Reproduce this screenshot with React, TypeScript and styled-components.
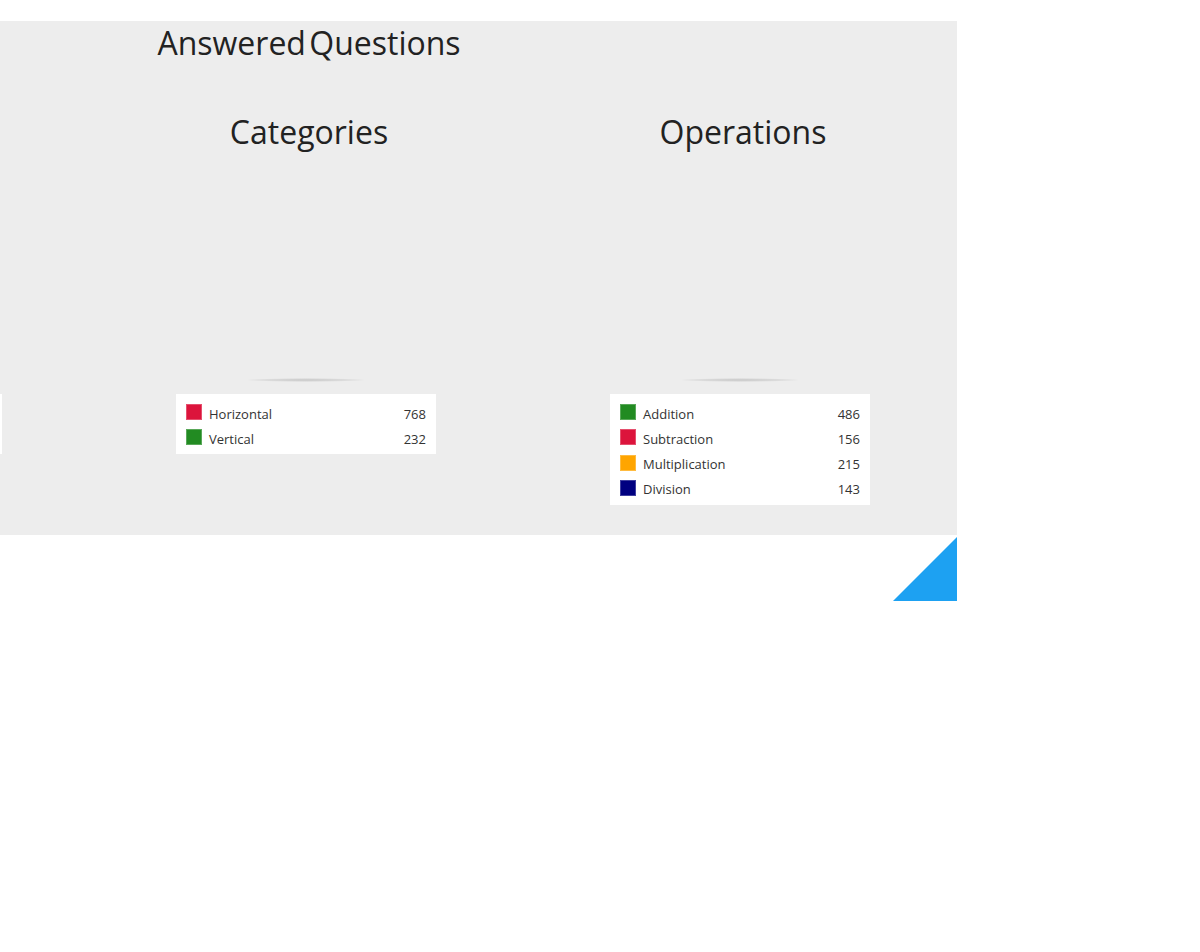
import React from "react";
import styled, { createGlobalStyle } from "styled-components";

const Global = createGlobalStyle`
  html, body { margin: 0; padding: 0; background: #ffffff; }
  body { font-family: "Open Sans", "Liberation Sans", sans-serif; color: #222; }
`;

const Page = styled.div`
  width: 957px;
  padding-top: 21px;
`;

const Panel = styled.section`
  background: #ededed;
  overflow: hidden;
  padding-bottom: 30px;
`;

const Track = styled.div`
  width: 1302px;
  margin-left: -342px;
  display: grid;
  grid-template-columns: repeat(3, 434px);
`;

const Title = styled.h1`
  grid-column: 2;
  margin: 0;
  font-size: 32px;
  font-weight: 400;
  line-height: 44px;
  text-align: center;
  color: #222;
  word-spacing: -5px;
`;

const Column = styled.div`
  display: flex;
  flex-direction: column;
`;

const Heading = styled.h2`
  margin: 45px 0 0;
  font-size: 32px;
  font-weight: 400;
  line-height: 44px;
  text-align: center;
  color: #222;
`;

const ChartArea = styled.div`
  width: 428px;
  height: 240px;
  display: flex;
  flex-direction: column;
  justify-content: flex-end;
  align-items: center;
`;

const Shadow = styled.div`
  width: 124px;
  height: 4px;
  margin-bottom: 12px;
  border-radius: 50%;
  background: radial-gradient(ellipse at center, rgba(0,0,0,0.16) 0%, rgba(0,0,0,0.08) 45%, rgba(0,0,0,0) 70%);
`;

const Legend = styled.ul`
  list-style: none;
  margin: 0 0 0 84px;
  padding: 10px 10px 9px;
  width: 240px;
  background: #ffffff;
  display: flex;
  flex-direction: column;
  gap: 9.33px;
`;

const Row = styled.li`
  display: flex;
  align-items: center;
  height: 16px;
  font-size: 13px;
  color: #333;
`;

const Swatch = styled.span<{ $color: string }>`
  width: 16px;
  height: 16px;
  flex: none;
  box-sizing: border-box;
  background: ${(p) => p.$color};
  border: 1px solid rgba(255,255,255,0.25);
  margin-right: 7px;
`;

const Label = styled.span`
  flex: 1;
  padding-top: 3px;
`;

const Value = styled.span`
  text-align: right;
  padding-top: 3px;
`;

const Footer = styled.div`
  display: flex;
  justify-content: flex-end;
  margin-top: 2px;
`;

const Corner = styled.div`
  width: 0;
  height: 0;
  border-style: solid;
  border-width: 0 0 64px 64px;
  border-color: transparent transparent #1da1f2 transparent;
`;

type Item = { label: string; value: number; color: string };

const columns: { title: string; items: Item[] }[] = [
  {
    title: "",
    items: [
      { label: "Correct", value: 0, color: "#228b22" },
      { label: "Wrong", value: 0, color: "#dc143c" },
    ],
  },
  {
    title: "Categories",
    items: [
      { label: "Horizontal", value: 768, color: "#dc143c" },
      { label: "Vertical", value: 232, color: "#228b22" },
    ],
  },
  {
    title: "Operations",
    items: [
      { label: "Addition", value: 486, color: "#228b22" },
      { label: "Subtraction", value: 156, color: "#dc143c" },
      { label: "Multiplication", value: 215, color: "#ffa500" },
      { label: "Division", value: 143, color: "#000080" },
    ],
  },
];

export default function App() {
  return (
    <>
      <Global />
      <Page>
        <Panel>
          <Track>
            <Title>Answered Questions</Title>
          </Track>
          <Track>
            {columns.map((c, i) => (
              <Column key={i}>
                <Heading>{c.title || "\u00a0"}</Heading>
                <ChartArea>
                  <Shadow />
                </ChartArea>
                <Legend>
                  {c.items.map((it) => (
                    <Row key={it.label}>
                      <Swatch $color={it.color} />
                      <Label>{it.label}</Label>
                      <Value>{it.value}</Value>
                    </Row>
                  ))}
                </Legend>
              </Column>
            ))}
          </Track>
        </Panel>
        <Footer>
          <Corner />
        </Footer>
      </Page>
    </>
  );
}
